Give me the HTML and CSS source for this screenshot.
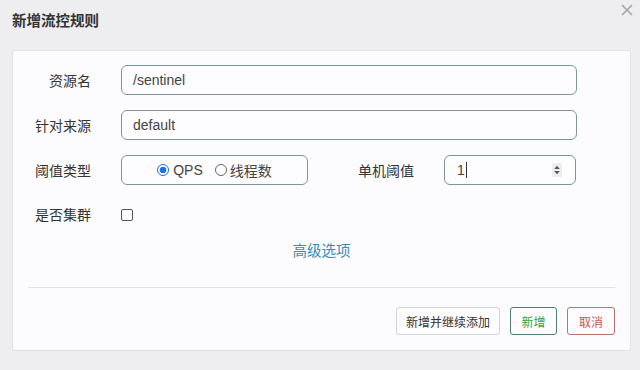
FILE: index.html
```html
<!DOCTYPE html>
<html lang="zh-CN">
<head>
<meta charset="utf-8">
<title>新增流控规则</title>
<link rel="stylesheet" href="styles.css">
</head>
<body>
<div class="dialog">
  <div class="dialog-header">
    <h3 class="dialog-title">新增流控规则</h3>
    <svg class="close" width="12" height="12" viewBox="0 0 12 12"><path d="M1 1 L11 11 M11 1 L1 11" stroke="#a6a6a6" stroke-width="1.6" fill="none"/></svg>
  </div>
  <div class="card">
    <div class="form-row">
      <label class="label">资源名</label>
      <div class="control wide">/sentinel</div>
    </div>
    <div class="form-row">
      <label class="label">针对来源</label>
      <div class="control wide">default</div>
    </div>
    <div class="form-row">
      <label class="label">阈值类型</label>
      <div class="control radios">
        <span class="radio checked"></span><span class="radio-text">QPS</span>
        <span class="radio"></span><span class="radio-text cjk">线程数</span>
      </div>
      <label class="label label-right">单机阈值</label>
      <div class="control number">
        <span class="num-value">1<span class="caret"></span></span>
        <svg class="spinner" width="10" height="14" viewBox="0 0 10 14"><rect x="0" y="0" width="10" height="14" rx="1" fill="#ededed"/><path d="M2.2 6 L5 2.8 L7.8 6 Z M2.2 8 L5 11.2 L7.8 8 Z" fill="#555"/></svg>
      </div>
    </div>
    <div class="form-row check-row">
      <label class="label">是否集群</label>
      <span class="checkbox"></span>
    </div>
    <div class="advanced"><a class="link">高级选项</a></div>
    <div class="divider"></div>
    <div class="footer">
      <button class="btn btn-default">新增并继续添加</button>
      <button class="btn btn-success">新增</button>
      <button class="btn btn-danger">取消</button>
    </div>
  </div>
</div>
</body>
</html>
```
FILE: styles.css
```css
html, body {
  margin: 0;
  padding: 0;
  background: #eeedef;
  width: 640px;
  height: 370px;
  overflow: hidden;
  font-family: "Liberation Sans", "Noto Sans CJK SC", sans-serif;
  color: #333;
}

.dialog {
  padding: 0 9px 0 12px;
}

.dialog-header {
  height: 50px;
  display: flex;
  align-items: flex-start;
  justify-content: space-between;
}

.dialog-title {
  margin: 10px 0 0 0;
  font-size: 14.5px;
  font-weight: bold;
  color: #333;
  line-height: 20px;
  font-family: "Noto Sans CJK SC", sans-serif;
}

.close {
  display: block;
  margin-top: 4px;
  margin-right: -2px;
}

.card {
  width: 587px;
  height: 270px;
  background: #fcfbfd;
  border: 1px solid #e2e1e4;
  border-radius: 3px;
  padding: 14px 15px 15px 15px;
  display: flex;
  flex-direction: column;
}

.form-row {
  display: flex;
  align-items: center;
  height: 30px;
  margin-bottom: 15px;
}

.label {
  width: 63px;
  text-align: right;
  margin-right: 30px;
  font-size: 14px;
  color: #333;
  font-family: "Noto Sans CJK SC", sans-serif;
}

.label-right {
  width: 58px;
  margin-left: 48px;
}

.control {
  box-sizing: border-box;
  height: 30px;
  border: 1px solid #7d9699;
  border-radius: 6px;
  background: #fdfcfe;
  display: flex;
  align-items: center;
  padding-left: 11px;
  font-size: 14px;
  color: #444;
}

.wide {
  width: 456px;
}

.radios {
  width: 187px;
  justify-content: center;
  padding-left: 0;
  padding-right: 0;
}

.radio {
  box-sizing: border-box;
  width: 12px;
  height: 12px;
  border: 1px solid #666;
  border-radius: 50%;
  display: inline-block;
  background: #fff;
}

.radio.checked {
  border: 1px solid #1a73e8;
  background: radial-gradient(circle, #1a73e8 0 3.2px, #fff 3.6px);
}

.radio-text {
  margin-left: 4px;
  margin-right: 12px;
  font-size: 14px;
  color: #444;
}

.radio-text.cjk {
  margin-left: 3px;
  margin-right: 0;
  font-family: "Noto Sans CJK SC", sans-serif;
}

.number {
  width: 132px;
  padding-left: 12px;
  padding-right: 13px;
  justify-content: space-between;
}

.num-value {
  display: flex;
  align-items: center;
}

.caret {
  display: inline-block;
  width: 1px;
  height: 16px;
  background: #333;
  margin-left: 1px;
}

.spinner {
  display: block;
}

.check-row {
  height: 30px;
  margin-bottom: 12px;
}

.checkbox {
  box-sizing: border-box;
  width: 12px;
  height: 12px;
  border: 1px solid #555;
  border-radius: 2px;
  background: #fff;
  margin-top: 1px;
}

.advanced {
  text-align: center;
  height: 20px;
  line-height: 20px;
}

.link {
  font-size: 14.5px;
  color: #3a8bb8;
  font-family: "Noto Sans CJK SC", sans-serif;
}

.divider {
  height: 1px;
  background: #e3e3e5;
  margin-top: 27px;
}

.footer {
  margin-top: 19px;
  display: flex;
  justify-content: flex-end;
  gap: 10px;
}

.btn {
  box-sizing: border-box;
  height: 28px;
  padding: 0;
  white-space: nowrap;
  text-align: center;
  font-size: 12px;
  font-family: "Noto Sans CJK SC", sans-serif;
  border-radius: 3px;
  background: #fdfcfe;
  cursor: pointer;
}

.btn-default {
  width: 104px;
  border: 1px solid #d4d4d6;
  color: #333;
}

.btn-success {
  width: 47px;
  border: 1px solid #4f7f6c;
  color: #34a046;
}

.btn-danger {
  width: 48px;
  border: 1px solid #c2706c;
  color: #c9544e;
}
```
